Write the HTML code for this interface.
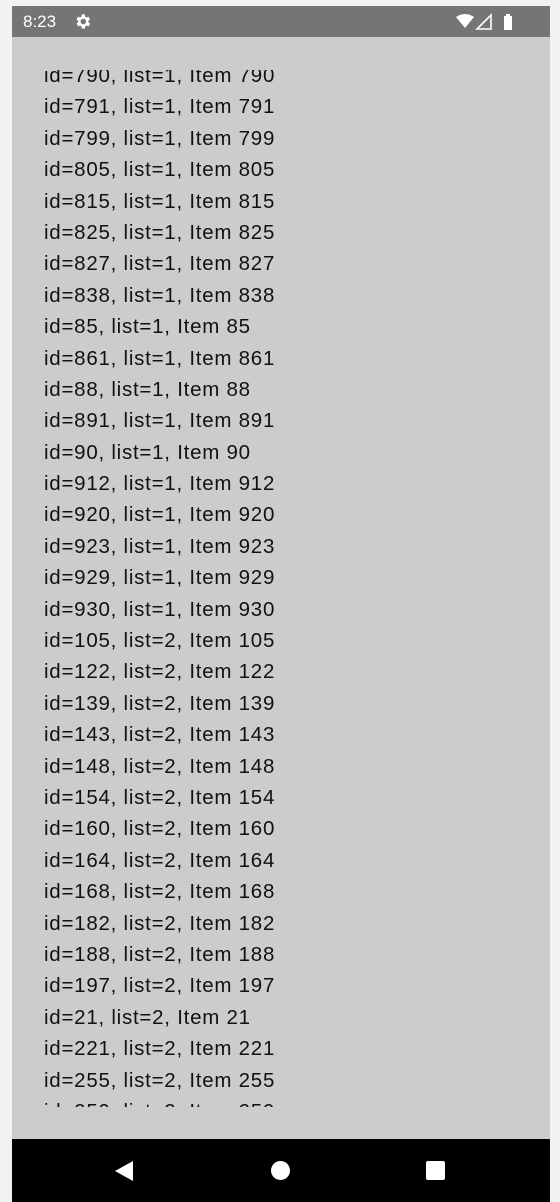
<!DOCTYPE html>
<html><head><style>
html,body{margin:0;padding:0;}
body{width:560px;height:1202px;background:#f2f2f2;position:relative;overflow:hidden;font-family:"Liberation Sans",sans-serif;}
#sb{position:absolute;left:12px;top:6px;width:538px;height:31px;background:#757575;color:#fff;}
#sb .t{position:absolute;left:11px;top:6px;font-size:17px;}
#content{position:absolute;left:12px;top:37px;width:538px;height:1102px;background:#cccccc;}
#clip{position:absolute;left:0;top:33px;width:538px;height:1037px;overflow:hidden;}
#list{position:absolute;left:32px;top:-10px;font-size:20.5px;letter-spacing:0.75px;line-height:31.39px;color:#111;white-space:nowrap;}
#nav{position:absolute;left:12px;top:1139px;width:538px;height:63px;background:#000;}
</style></head><body>
<div id="sb"><span class="t">8:23</span>
<svg style="position:absolute;left:61px;top:6px" width="19" height="19" viewBox="0 0 24 24"><path fill="#fff" d="M19.4 13a7.5 7.5 0 000-2l2.1-1.6-2-3.5-2.5 1a7.3 7.3 0 00-1.7-1L15 3h-4l-.4 2.9a7.3 7.3 0 00-1.7 1l-2.5-1-2 3.5L6.6 11a7.5 7.5 0 000 2l-2.1 1.6 2 3.5 2.5-1a7.3 7.3 0 001.7 1L11 21h4l.4-2.9a7.3 7.3 0 001.7-1l2.5 1 2-3.5zM13 15.5a3.5 3.5 0 110-7 3.5 3.5 0 010 7z"/></svg>
<svg style="position:absolute;left:443px;top:7px" width="60" height="18" viewBox="0 0 60 18"><path fill="#fff" d="M1 4 Q10 -2 19 4 L10 15 Z"/><path fill="none" stroke="#fff" stroke-width="1.6" d="M36 2 L36 16 L22 16 Z"/><rect x="49" y="3" width="8" height="14" fill="#fff"/><rect x="51" y="1" width="4" height="3" fill="#fff"/></svg>
</div>
<div id="content"><div id="clip"><div id="list">
id=790, list=1, Item 790<br>id=791, list=1, Item 791<br>id=799, list=1, Item 799<br>id=805, list=1, Item 805<br>id=815, list=1, Item 815<br>id=825, list=1, Item 825<br>id=827, list=1, Item 827<br>id=838, list=1, Item 838<br>id=85, list=1, Item 85<br>id=861, list=1, Item 861<br>id=88, list=1, Item 88<br>id=891, list=1, Item 891<br>id=90, list=1, Item 90<br>id=912, list=1, Item 912<br>id=920, list=1, Item 920<br>id=923, list=1, Item 923<br>id=929, list=1, Item 929<br>id=930, list=1, Item 930<br>id=105, list=2, Item 105<br>id=122, list=2, Item 122<br>id=139, list=2, Item 139<br>id=143, list=2, Item 143<br>id=148, list=2, Item 148<br>id=154, list=2, Item 154<br>id=160, list=2, Item 160<br>id=164, list=2, Item 164<br>id=168, list=2, Item 168<br>id=182, list=2, Item 182<br>id=188, list=2, Item 188<br>id=197, list=2, Item 197<br>id=21, list=2, Item 21<br>id=221, list=2, Item 221<br>id=255, list=2, Item 255<br>id=259, list=2, Item 259
</div></div></div>
<div id="nav">
<svg style="position:absolute;left:102px;top:21px" width="20" height="22" viewBox="0 0 20 22"><path fill="#fff" d="M19 1 L19 21 L1 11 Z"/></svg>
<div style="position:absolute;left:259px;top:22px;width:19px;height:19px;border-radius:50%;background:#fff"></div>
<div style="position:absolute;left:414px;top:22px;width:19px;height:19px;border-radius:2px;background:#fff"></div>
</div>
</body></html>
